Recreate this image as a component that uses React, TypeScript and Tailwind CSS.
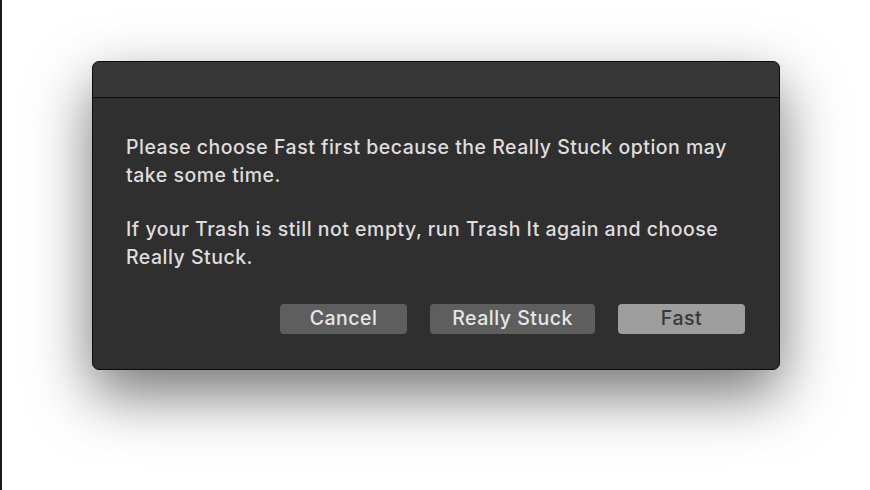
export default function App() {
  const font = { fontFamily: "Inter, 'Noto Sans', sans-serif" }
  return (
    <div className="w-[870px] h-[490px] bg-white border-l-2 border-[#1a1a1a] overflow-hidden" style={font}>
      <div className="mx-auto mt-[61px] w-[688px] h-[309px] rounded-[7px] border border-[#0c0c0c] bg-[#2f2f2f] shadow-[0_24px_60px_rgba(0,0,0,0.55)] overflow-hidden flex flex-col">
        <div className="h-[36px] bg-[#373737] border-b border-[#0a0a0a] shrink-0" />
        <div className="flex-1 pl-[33px] pr-[30px] pt-[35px] text-[#dedede] tracking-[0.5px]">
          <div className="w-[620px] text-[19.5px] leading-[28px] font-medium">
            <p>Please choose Fast first because the Really Stuck option may take some time.</p>
            <p className="mt-[26px]">If your Trash is still not empty, run Trash It again and choose Really Stuck.</p>
          </div>
          <div className="flex justify-end gap-[23px] mt-[33px] pr-[4px] text-[19.5px] font-medium">
            <button className="w-[127px] h-[30px] rounded-[4px] bg-[#5e5e5e] text-[#e6e6e6]">Cancel</button>
            <button className="w-[165px] h-[30px] rounded-[4px] bg-[#5e5e5e] text-[#e6e6e6]">Really Stuck</button>
            <button className="w-[127px] h-[30px] rounded-[4px] bg-[#9d9d9d] text-[#383838]">Fast</button>
          </div>
        </div>
      </div>
    </div>
  )
}
